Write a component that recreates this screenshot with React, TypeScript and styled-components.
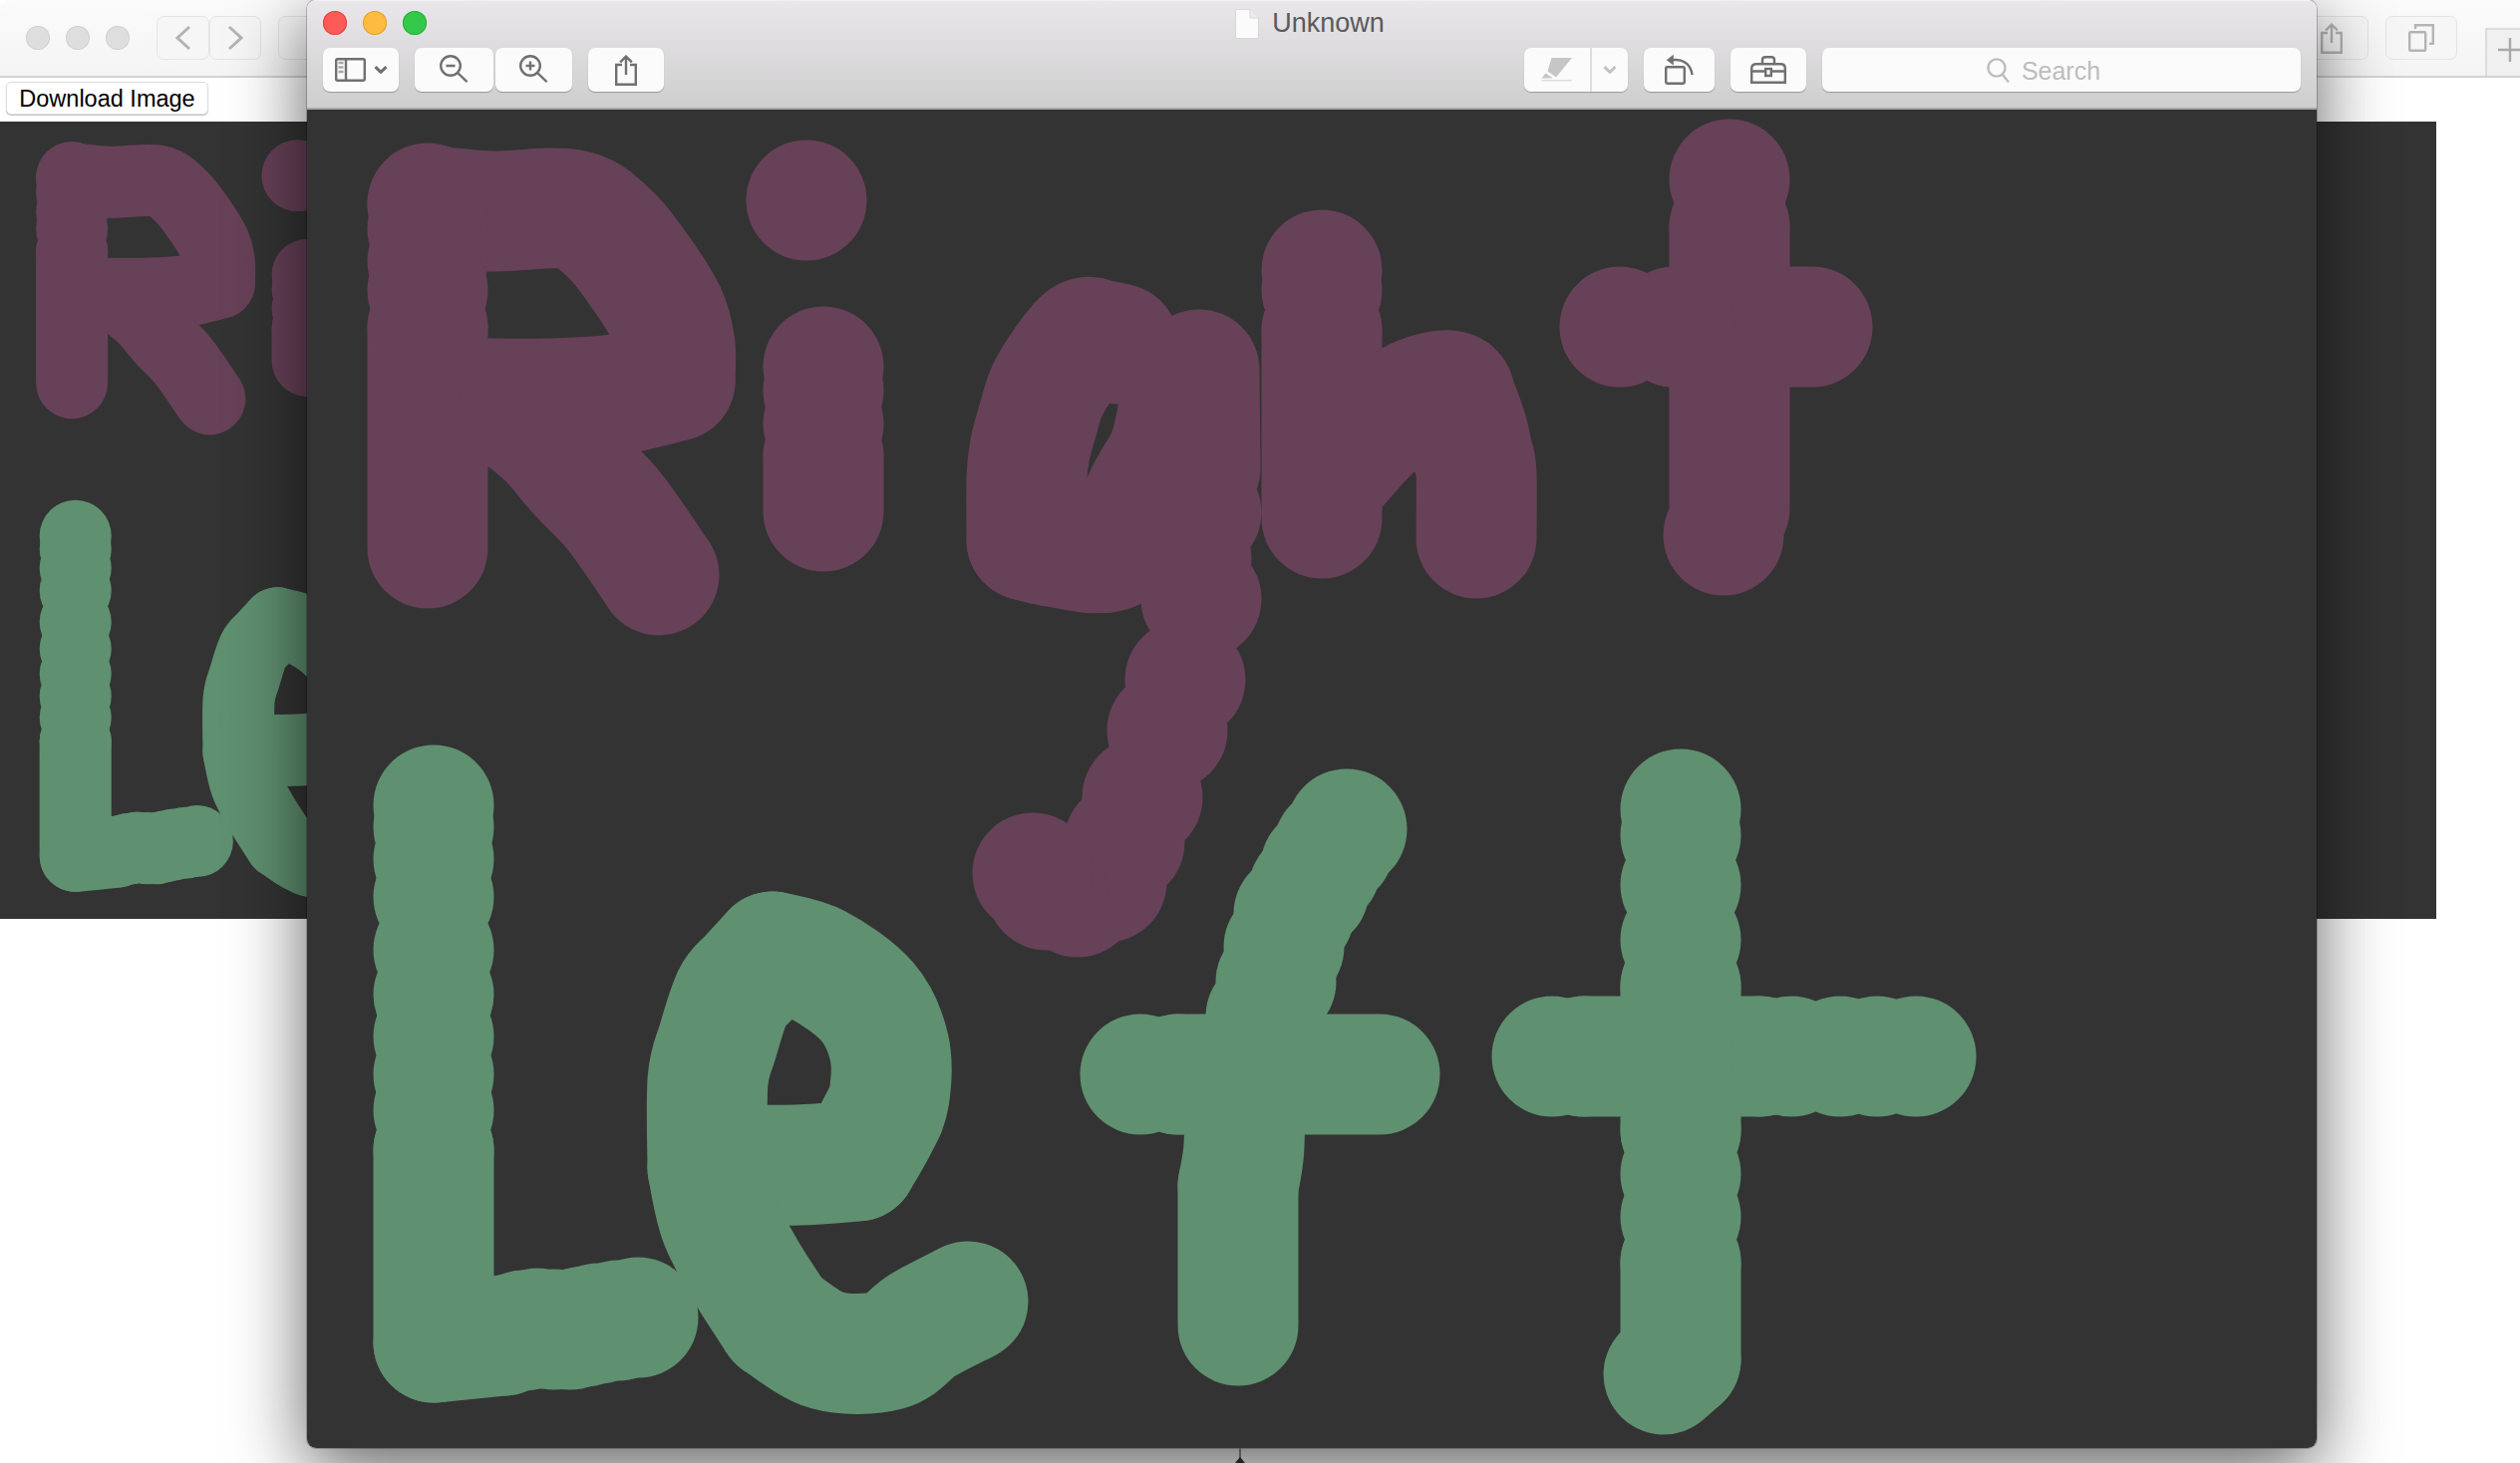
import React from "react";
import styled, { createGlobalStyle } from "styled-components";

type Point = [number, number];
type Glyph = { lines: Point[][]; dots: Point[] };

const column = (x: number, ys: number[]): Point[] => ys.map((y): Point => [x, y]);
const row = (y: number, xs: number[]): Point[] => xs.map((x): Point => [x, y]);

// traced from the drawing, page coordinates of the big window
const PURPLE_GLYPHS: Glyph[] = [
  {
    lines: [
      [[429, 329], [429, 550]],
      [[429, 206], [492, 212], [572, 210], [610, 233], [641, 271], [668, 314], [677, 347], [677, 382]],
      [[677, 382], [617, 396], [550, 400], [490, 400]],
      [[519, 414], [550, 440], [581, 476], [617, 514], [661, 577]],
    ],
    dots: column(429, [204, 230, 262, 291, 329]),
  },
  {
    lines: [[[826, 458], [826, 513]]],
    dots: [[809, 201], ...column(826, [368, 392, 425, 458])],
  },
  {
    lines: [
      [[1122, 345], [1102, 341], [1085, 342], [1053, 387], [1041, 422], [1033, 452], [1030, 480], [1030, 542]],
      [[1030, 542], [1060, 549], [1111, 554], [1150, 530]],
      [[1203, 371], [1204, 470]],
      [[1182, 414], [1172, 455], [1150, 495], [1130, 540]],
    ],
    dots: [
      [1205, 514], [1205, 601], [1189, 682], [1171, 733], [1146, 800], [1128, 845],
      [1110, 885], [1081, 900], [1050, 893], [1036, 876], [1195, 560],
    ],
  },
  {
    lines: [
      [[1326, 332], [1326, 520]],
      [[1340, 470], [1380, 427], [1420, 400], [1454, 392], [1462, 405], [1473, 436], [1477, 455], [1481, 475], [1481, 540]],
    ],
    dots: column(1326, [271, 291, 332]),
  },
  {
    lines: [
      [[1735, 228], [1735, 510]],
      [[1680, 328], [1818, 328]],
    ],
    dots: [[1735, 180], [1735, 228], [1625, 328], [1680, 328], [1729, 537]],
  },
];

const GREEN_GLYPHS: Glyph[] = [
  {
    lines: [
      [[435, 1154], [435, 1347]],
      [[435, 1347], [505, 1340]],
    ],
    dots: [
      ...column(435, [808, 830, 862, 900, 953, 998, 1040, 1078, 1114, 1154]),
      [505, 1340], [525, 1335], [539, 1333], [556, 1334], [572, 1334], [586, 1331], [600, 1328], [620, 1325], [640, 1322],
    ],
  },
  {
    lines: [
      [[775, 955], [820, 968], [870, 1005], [892, 1051], [892, 1100], [880, 1130], [860, 1165]],
      [[860, 1165], [800, 1169], [720, 1169]],
      [[775, 955], [752, 980], [735, 1000], [720, 1045], [710, 1085], [710, 1172]],
      [[710, 1172], [722, 1225], [748, 1275], [780, 1325]],
      [[780, 1325], [830, 1355], [890, 1355], [925, 1330], [971, 1306]],
    ],
    dots: [],
  },
  {
    lines: [
      [[1182, 1078], [1384, 1078]],
      [[1248, 1078], [1248, 1150], [1242, 1190]],
      [[1242, 1190], [1242, 1330]],
    ],
    dots: [
      [1351, 832], [1338, 850], [1325, 870], [1313, 893], [1298, 917], [1288, 950], [1280, 985], [1270, 1020], [1265, 1060],
      [1144, 1078], [1182, 1078],
    ],
  },
  {
    lines: [
      [[1686, 990], [1686, 1134]],
      [[1686, 1267], [1686, 1364]],
      [[1686, 1364], [1669, 1379]],
      [[1589, 1060], [1766, 1060]],
    ],
    dots: [
      ...column(1686, [812, 838, 888, 943, 990, 1134, 1178, 1221, 1267]),
      ...row(1060, [1557, 1589, 1766, 1797, 1846, 1883, 1922]),
    ],
  },
];

// the strokes were drawn freehand: round off the corners of the traced points
const smoothPath = (points: Point[]) => {
  const at = (i: number) => points[Math.max(0, Math.min(points.length - 1, i))];
  let d = `M${points[0][0]} ${points[0][1]}`;
  for (let i = 0; i < points.length - 1; i++) {
    const [p0, p1, p2, p3] = [at(i - 1), at(i), at(i + 1), at(i + 2)];
    const c1 = [p1[0] + (p2[0] - p0[0]) / 6, p1[1] + (p2[1] - p0[1]) / 6];
    const c2 = [p2[0] - (p3[0] - p1[0]) / 6, p2[1] - (p3[1] - p1[1]) / 6];
    d += `C${c1[0]} ${c1[1]} ${c2[0]} ${c2[1]} ${p2[0]} ${p2[1]}`;
  }
  return d;
};

const GlobalStyle = createGlobalStyle`
  html, body {
    margin: 0;
    padding: 0;
    background: #ffffff;
    font-family: "Liberation Sans", Arial, sans-serif;
  }
`;

const Desktop = styled.div`
  position: relative;
  width: 2528px;
  height: 1468px;
  overflow: hidden;
  background: #ffffff;
`;

const BrowserWindow = styled.div`
  display: flex;
  flex-direction: column;
  align-items: flex-start;
`;

const BrowserToolbar = styled.div`
  box-sizing: border-box;
  width: 100%;
  height: 78px;
  display: flex;
  align-items: flex-start;
  padding: 16px 0 0 26px;
  background: linear-gradient(#fbfbfb, #f4f4f4);
  border-bottom: 2px solid #d2d2d2;
  border-radius: 10px 0 0 0;
`;

const Lights = styled.div<{ $gap: number }>`
  display: flex;
  gap: ${({ $gap }) => $gap}px;
`;

const IdleLight = styled.span`
  width: 24px;
  height: 24px;
  margin-top: 10px;
  border-radius: 50%;
  background: #dedede;
  box-shadow: inset 0 0 0 1px #d2d2d2;
`;

const BrowserButton = styled.div<{ $width: number; $left?: number }>`
  box-sizing: border-box;
  width: ${({ $width }) => $width}px;
  height: 44px;
  margin-left: ${({ $left = 0 }) => $left}px;
  display: flex;
  align-items: center;
  justify-content: center;
  flex: none;
  border: 1px solid #e4e4e4;
  border-radius: 7px;
  background: #f6f6f6;
  color: #b4b4b4;
`;

const NewTab = styled.div`
  box-sizing: border-box;
  width: 35px;
  height: 48px;
  margin: 12px 0 0 28px;
  padding: 0 0 6px 12px;
  display: flex;
  align-items: center;
  justify-content: center;
  flex: none;
  border-left: 2px solid #dcdcdc;
  border-top: 2px solid #dcdcdc;
  background: #f0f0f0;
  color: #a8a8a8;
`;

const Spacer = styled.div`
  flex: 1;
`;

const DownloadBar = styled.div`
  box-sizing: border-box;
  height: 44px;
  padding: 4px 0 0 6px;
`;

const DownloadButton = styled.button`
  box-sizing: border-box;
  width: 203px;
  height: 33px;
  padding: 3px 0 0;
  border: 1px solid #dddddd;
  border-radius: 5px;
  background: #ffffff;
  box-shadow: 0 1px 1px rgba(0, 0, 0, 0.25);
  color: #000000;
  font-family: "Liberation Sans", Arial, sans-serif;
  font-size: 23.5px;
  line-height: 1;
`;

const Canvas = styled.div<{ $width: number; $height: number }>`
  width: ${({ $width }) => $width}px;
  height: ${({ $height }) => $height}px;
  background: #333333;
  overflow: hidden;
`;

const Doodle = styled.svg<{ $width: number; $height: number }>`
  display: block;
  width: ${({ $width }) => $width}px;
  height: ${({ $height }) => $height}px;

  path {
    fill: none;
    stroke-width: 121;
    stroke-linecap: round;
    stroke-linejoin: round;
  }
`;

const PreviewWindow = styled.div`
  position: absolute;
  left: 308px;
  top: 0;
  width: 2016px;
  height: 1453px;
  display: flex;
  flex-direction: column;
  border-radius: 9px;
  overflow: hidden;
`;

const WindowShadow = styled.div`
  position: absolute;
  left: 308px;
  top: 0;
  width: 2016px;
  height: 1453px;
  border-radius: 9px;
  box-shadow: 0 22px 75px rgba(0, 0, 0, 0.62), 0 0 0 1px rgba(0, 0, 0, 0.22);
`;

const TitleBar = styled.div`
  box-sizing: border-box;
  height: 110px;
  flex: none;
  display: flex;
  flex-direction: column;
  background: linear-gradient(#e9e7e9, #cfcecf);
  border-top: 1px solid #f3f2f3;
  border-bottom: 2px solid #a9a8a9;
`;

const TitleRow = styled.div`
  height: 43px;
  margin-bottom: 4px;
  flex: none;
  display: grid;
  grid-template-columns: 1fr auto 1fr;
  align-items: center;
  padding: 0 16px;
`;

const Light = styled.span<{ $color: string; $edge: string }>`
  width: 24px;
  height: 24px;
  border-radius: 50%;
  background: ${({ $color }) => $color};
  box-shadow: inset 0 0 0 1px ${({ $edge }) => $edge};
`;

const Title = styled.div`
  display: flex;
  align-items: center;
  gap: 13px;
  padding: 2px 4px 0 0;
  color: #5a5a5e;
  font-size: 27px;
  line-height: 1;
`;

const Tools = styled.div`
  display: flex;
  align-items: flex-start;
  padding: 0 16px;
  gap: 16px;
`;

const ToolGroup = styled.div`
  display: flex;
  gap: 2px;
`;

const ToolButton = styled.div<{ $width: number }>`
  width: ${({ $width }) => $width}px;
  height: 44px;
  flex: none;
  display: flex;
  align-items: center;
  justify-content: center;
  gap: 8px;
  border-radius: 7px;
  background: #fbfbfb;
  box-shadow: 0 1px 1px rgba(0, 0, 0, 0.28);
  color: #707070;
`;

const MarkupPen = styled(ToolButton)`
  border-radius: 7px 0 0 7px;
  box-shadow: none;
  color: #c6c6c6;
`;

const MarkupChevron = styled(ToolButton)`
  border-radius: 0 7px 7px 0;
  border-left: 2px solid #dedede;
  box-shadow: none;
  color: #c2c2c2;
`;

const MarkupGroup = styled.div`
  display: flex;
  border-radius: 7px;
  box-shadow: 0 1px 1px rgba(0, 0, 0, 0.28);
`;

const SearchField = styled.div`
  box-sizing: border-box;
  width: 480px;
  height: 44px;
  flex: none;
  display: flex;
  align-items: center;
  justify-content: center;
  gap: 11px;
  padding: 2px 36px 0 0;
  border-radius: 7px;
  background: #fbfbfb;
  box-shadow: 0 1px 1px rgba(0, 0, 0, 0.28);
  color: #bdbdbd;
  font-size: 25px;
`;

const PreviewBody = styled.div`
  flex: 1;
  background: #333333;
`;

const BottomSeam = styled.div`
  position: absolute;
  left: 1243px;
  top: 1453px;
  width: 2px;
  height: 15px;
  background: #555555;

  &::after {
    content: "";
    position: absolute;
    left: -4px;
    bottom: 0;
    border-left: 5px solid transparent;
    border-right: 5px solid transparent;
    border-bottom: 6px solid #222222;
  }
`;

const Icon = styled.svg`
  display: block;
  flex: none;
  fill: none;
  stroke: currentColor;
  stroke-width: 2.4;
`;

const Glyphs = ({ glyphs, color }: { glyphs: Glyph[]; color: string }) => (
  <g stroke={color} fill={color}>
    {glyphs.map((glyph, i) => (
      <g key={i}>
        {glyph.lines.map((line, j) => (
          <path key={j} d={smoothPath(line)} />
        ))}
        {glyph.dots.map(([x, y], j) => (
          <circle key={j} cx={x} cy={y} r={60.5} stroke="none" />
        ))}
      </g>
    ))}
  </g>
);

const Drawing = ({ width, height }: { width: number; height: number }) => (
  <Doodle $width={width} $height={height} viewBox="308 110 2016 1343">
    <Glyphs glyphs={PURPLE_GLYPHS} color="#674158" />
    <Glyphs glyphs={GREEN_GLYPHS} color="#5f9070" />
  </Doodle>
);

const Chevron = ({ width = 14 }: { width?: number }) => (
  <Icon width={width} height={8} viewBox="0 0 14 8" strokeWidth={3}>
    <path d="M1.5 1.2 7 6.4l5.5-5.2" strokeWidth={3} />
  </Icon>
);

const SidebarIcon = () => (
  <Icon width={31} height={24} viewBox="0 0 31 24">
    <rect x="1.2" y="1.2" width="28.6" height="21.6" rx="1.5" />
    <path d="M11 1.2v21.6" />
    <path d="M3.5 5h5M3.5 9.5h5M3.5 14h5" stroke="#a8a8a8" />
  </Icon>
);

const LensIcon = ({ plus }: { plus?: boolean }) => (
  <Icon width={30} height={30} viewBox="0 0 30 30">
    <circle cx="11" cy="11" r="9.8" />
    <path d="M18 18l9.6 9.2" />
    <path d="M6.5 11h9" />
    {plus && <path d="M11 6.5v9" />}
  </Icon>
);

const ShareIcon = ({ width = 22, height = 31 }: { width?: number; height?: number }) => (
  <Icon width={width} height={height} viewBox="0 0 22 31">
    <path d="M7 10H1.2v19.8h19.6V10H15" />
    <path d="M11 20V1.8M5.2 7.4 11 1.6l5.8 5.8" />
  </Icon>
);

const PenIcon = () => (
  <Icon width={32} height={26} viewBox="0 0 32 26" stroke="none">
    <path d="M10.5 1H31L15 20.5 6.5 14.5z" fill="currentColor" stroke="none" />
    <path d="M4.5 16.5 12 21.5H0.5z" fill="currentColor" stroke="none" />
    <path d="M0.5 23h30v1.4H0.5z" fill="currentColor" stroke="none" opacity="0.6" />
  </Icon>
);

const RotateIcon = () => (
  <Icon width={30} height={32} viewBox="0 0 30 32">
    <rect x="1.2" y="13.2" width="18.6" height="16.6" rx="1.2" />
    <path d="M8 6.2c9-1 18 2.5 19.6 15" />
    <path d="M7.8 0.8v10.6L0.8 6.2z" fill="currentColor" stroke="none" transform="translate(1 0)" />
  </Icon>
);

const ToolboxIcon = () => (
  <Icon width={36} height={28} viewBox="0 0 36 28">
    <path d="M1.2 26.8V12.4C1.2 9.6 3 8.2 6 8.2h24c3 0 4.8 1.4 4.8 4.2v14.4z" />
    <path d="M12 8V4c0-1.8 1-2.8 3-2.8h6c2 0 3 1 3 2.8v4" />
    <path d="M1.2 15.5h13.4M21.4 15.5h13.4" />
    <rect x="15.2" y="13" width="5.6" height="7" />
  </Icon>
);

const SearchIcon = () => (
  <Icon width={24} height={26} viewBox="0 0 24 26">
    <circle cx="10" cy="10" r="8.6" />
    <path d="M16 17l6 7.4" />
  </Icon>
);

const PageIcon = () => (
  <svg width="24" height="30" viewBox="0 0 24 30">
    <path d="M0.5 0.5H15L23.5 9V29.5H0.5z" fill="#fbfbfb" stroke="#d8d8d8" />
    <path d="M15 0.5V9h8.5" fill="#ececec" stroke="#d8d8d8" />
  </svg>
);

const PlusIcon = () => (
  <Icon width={24} height={24} viewBox="0 0 24 24">
    <path d="M12 0v24M0 12h24" />
  </Icon>
);

const NavArrow = ({ flip }: { flip?: boolean }) => (
  <Icon width={16} height={26} viewBox="0 0 16 26" strokeWidth={3}>
    <path d={flip ? "M2 2l12 11L2 24" : "M14 2 2 13l12 11"} strokeWidth={3} />
  </Icon>
);

const TabsIcon = () => (
  <Icon width={26} height={28} viewBox="0 0 26 28">
    <rect x="1.2" y="8.2" width="16" height="18.6" rx="1" />
    <path d="M7 5V1.2h17.8v18.6H21" />
  </Icon>
);

const App = () => (
  <Desktop>
    <GlobalStyle />
    <BrowserWindow>
      <BrowserToolbar>
        <Lights $gap={16}>
          <IdleLight />
          <IdleLight />
          <IdleLight />
        </Lights>
        <BrowserButton $width={53} $left={27}>
          <NavArrow />
        </BrowserButton>
        <BrowserButton $width={52}>
          <NavArrow flip />
        </BrowserButton>
        <BrowserButton $width={60} $left={17} />
        <Spacer />
        <BrowserButton $width={74}>
          <ShareIcon />
        </BrowserButton>
        <BrowserButton $width={72} $left={17}>
          <TabsIcon />
        </BrowserButton>
        <NewTab>
          <PlusIcon />
        </NewTab>
      </BrowserToolbar>
      <DownloadBar>
        <DownloadButton>Download Image</DownloadButton>
      </DownloadBar>
      <Canvas $width={2444} $height={800}>
        <Drawing width={1201} height={800} />
      </Canvas>
    </BrowserWindow>

    <WindowShadow />
    <PreviewWindow>
      <TitleBar>
        <TitleRow>
          <Lights $gap={16}>
            <Light $color="#fc5b57" $edge="#e2443f" />
            <Light $color="#fdbc40" $edge="#e1a12f" />
            <Light $color="#34c84a" $edge="#2aae3c" />
          </Lights>
          <Title>
            <PageIcon />
            Unknown
          </Title>
        </TitleRow>
        <Tools>
          <ToolButton $width={76}>
            <SidebarIcon />
            <Chevron />
          </ToolButton>
          <ToolGroup>
            <ToolButton $width={79}>
              <LensIcon />
            </ToolButton>
            <ToolButton $width={77}>
              <LensIcon plus />
            </ToolButton>
          </ToolGroup>
          <ToolButton $width={76}>
            <ShareIcon />
          </ToolButton>
          <Spacer />
          <MarkupGroup>
            <MarkupPen $width={66}>
              <PenIcon />
            </MarkupPen>
            <MarkupChevron $width={36}>
              <Chevron />
            </MarkupChevron>
          </MarkupGroup>
          <ToolButton $width={71}>
            <RotateIcon />
          </ToolButton>
          <ToolButton $width={76}>
            <ToolboxIcon />
          </ToolButton>
          <SearchField>
            <SearchIcon />
            Search
          </SearchField>
        </Tools>
      </TitleBar>
      <PreviewBody>
        <Drawing width={2016} height={1343} />
      </PreviewBody>
    </PreviewWindow>
    <BottomSeam />
  </Desktop>
);

export default App;
